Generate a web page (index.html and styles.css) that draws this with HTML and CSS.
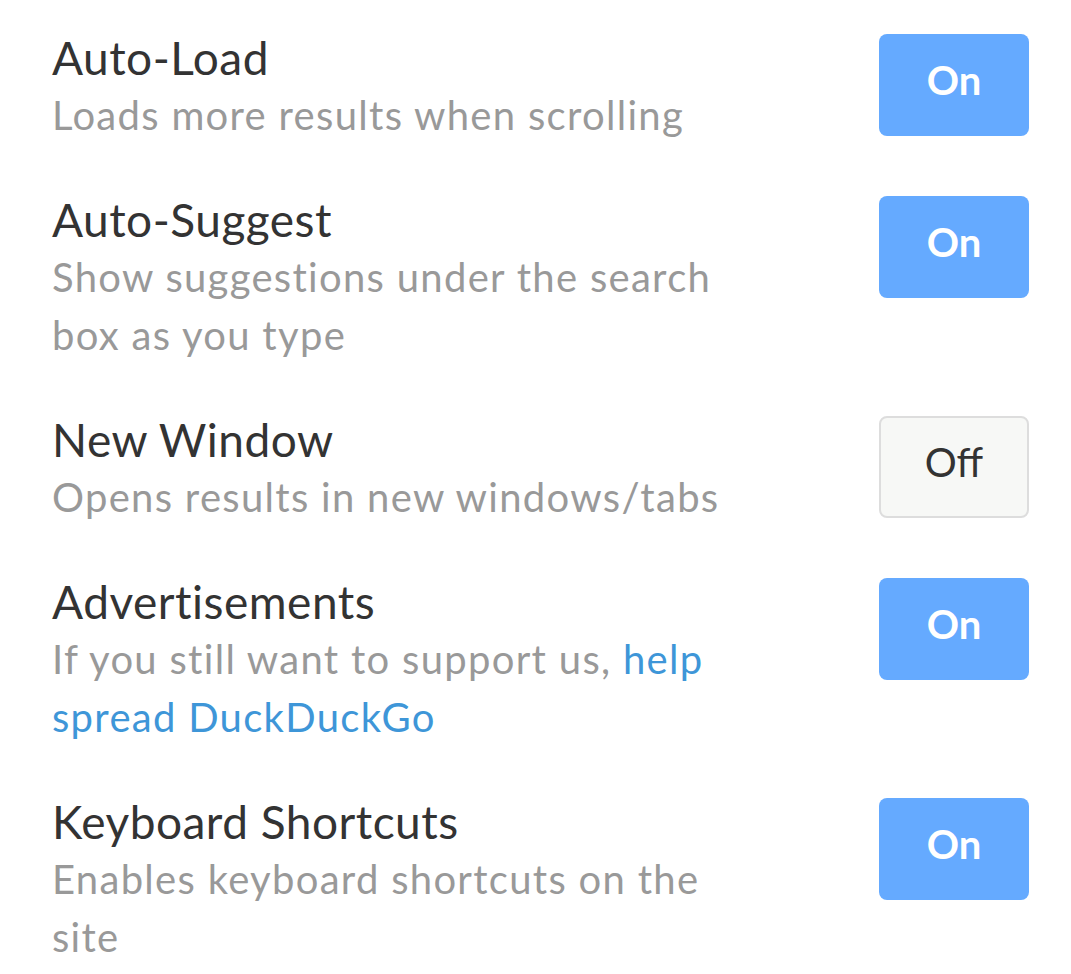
FILE: index.html
```html
<!DOCTYPE html>
<html>
<head>
  <title>Settings</title>
  <meta charset="UTF-8">
  <meta name="viewport" content="width=device-width, initial-scale=1.0">
  <link rel="stylesheet" href="styles.css">
</head>
<body>
  <div class="settings">
    <div class="setting">
      <div class="setting-text">
        <div class="setting-title">Auto-Load</div>
        <div class="setting-desc">Loads more results when scrolling</div>
      </div>
      <button class="toggle on">On</button>
    </div>

    <div class="setting">
      <div class="setting-text">
        <div class="setting-title">Auto-Suggest</div>
        <div class="setting-desc">Show suggestions under the search box as you type</div>
      </div>
      <button class="toggle on">On</button>
    </div>

    <div class="setting">
      <div class="setting-text">
        <div class="setting-title">New Window</div>
        <div class="setting-desc">Opens results in new windows/tabs</div>
      </div>
      <button class="toggle off">Off</button>
    </div>

    <div class="setting">
      <div class="setting-text">
        <div class="setting-title">Advertisements</div>
        <div class="setting-desc">If you still want to support us, <a href="#">help spread DuckDuckGo</a></div>
      </div>
      <button class="toggle on">On</button>
    </div>

    <div class="setting">
      <div class="setting-text">
        <div class="setting-title">Keyboard Shortcuts</div>
        <div class="setting-desc">Enables keyboard shortcuts on the site</div>
      </div>
      <button class="toggle on">On</button>
    </div>
  </div>
</body>
</html>
```

FILE: styles.css
```css
body {
  margin: 0;
  font-family: "Lato", "Liberation Sans", sans-serif;
  color: #333;
  background: #fff;
}
.settings {
  padding: 7px 42px 0 52px;
}
.setting {
  display: flex;
  justify-content: space-between;
  align-items: flex-start;
  padding: 23px 0;
}
.setting-text {
  width: 700px;
  padding-bottom: 2px;
}
.setting-title {
  font-size: 46px;
  line-height: 56px;
  letter-spacing: 0.5px;
  color: #333;
}
.setting-desc {
  font-size: 40px;
  line-height: 58px;
  letter-spacing: 1.3px;
  color: #999;
}
.setting-desc a {
  color: #3e96d8;
  text-decoration: none;
}
.toggle {
  width: 150px;
  height: 102px;
  margin-top: 4px;
  padding: 0 0 10px;
  border-radius: 8px;
  font-family: inherit;
  font-size: 40px;
  cursor: pointer;
}
.toggle.on {
  background-color: #65aaff;
  border: none;
  color: #fff;
  font-weight: bold;
}
.toggle.off {
  background-color: #f7f8f6;
  border: 2px solid #ddd;
  color: #333;
}
```
